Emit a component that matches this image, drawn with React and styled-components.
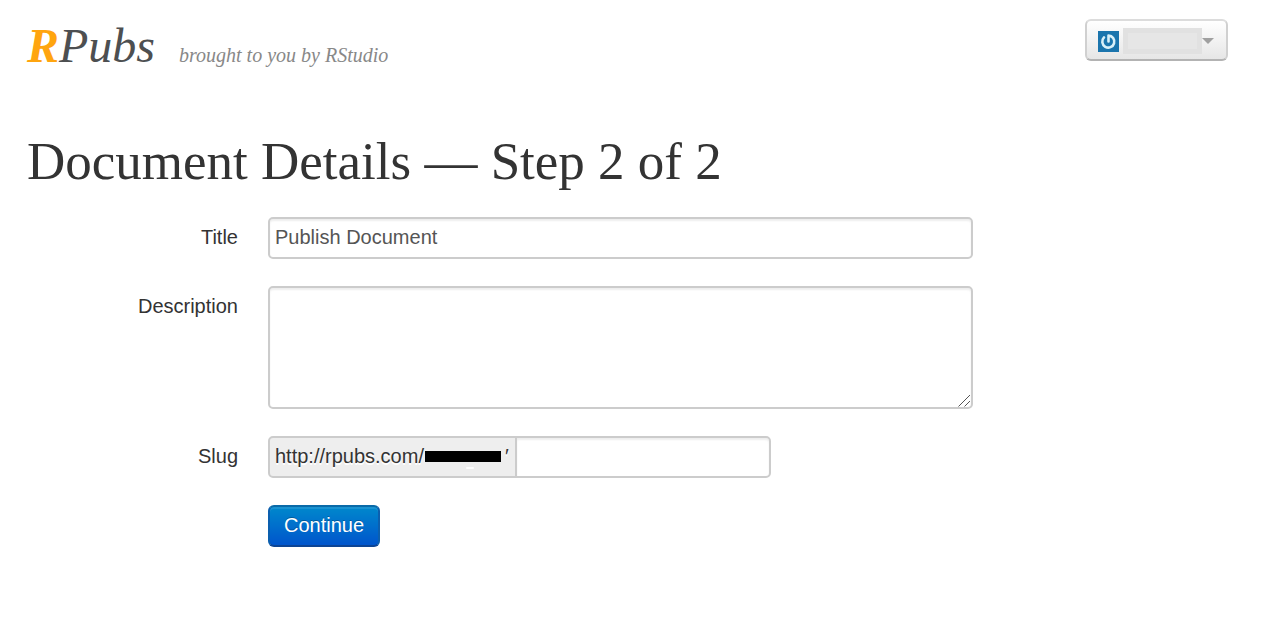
import React from "react";
import styled, { createGlobalStyle } from "styled-components";

const sans = `"Liberation Sans", Arial, sans-serif`;
const serif = `"Liberation Serif", "Times New Roman", serif`;

const GlobalStyle = createGlobalStyle`
  *, *::before, *::after { box-sizing: border-box; }
  body {
    margin: 0;
    background: #fff;
    color: #333;
    font: 20px/28px ${sans};
  }
`;

const Page = styled.div`
  padding: 19px 40px 40px 27px;
`;

const Header = styled.header`
  display: flex;
  justify-content: space-between;
  align-items: flex-start;
`;

const Brand = styled.div`
  display: flex;
  align-items: baseline;
  gap: 24px;
  font-family: ${serif};
  font-style: italic;
`;

const Logo = styled.a`
  font-size: 48px;
  line-height: 54px;
  color: #4d4f51;
  text-decoration: none;
`;

const LogoInitial = styled.b`
  color: #ffa50f;
`;

const Tagline = styled.span`
  font-size: 20px;
  color: #888;
`;

const AccountButton = styled.button`
  display: flex;
  align-items: center;
  width: 143px;
  height: 42px;
  padding: 2px 12px 0 11px;
  border: 2px solid #ccc;
  border-color: #dcdcdc #d0d0d0 #b3b3b3;
  border-radius: 6px;
  background: linear-gradient(#fff, #e6e6e6);
  cursor: pointer;
`;

const AccountName = styled.span`
  flex: 1;
  height: 26px;
  margin-left: 4px;
  border: 5px solid #e1e1e1;
  background: #e6e6e6;
`;

const Heading = styled.h1`
  margin: 58px 0 26px;
  font: 400 53px/60px ${serif};
`;

const Form = styled.form`
  display: grid;
  grid-template-columns: 211px minmax(0, 705px);
  column-gap: 30px;
  row-gap: 27px;
`;

const Label = styled.label`
  padding-top: 6px;
  text-align: right;
`;

const fieldStyle = `
  display: block;
  width: 100%;
  margin: 0;
  padding: 4px 5px 6px;
  border: 2px solid #ccc;
  border-radius: 5px;
  background: #fff;
  box-shadow: inset 0 2px 2px rgba(0, 0, 0, 0.07);
  color: #555;
  font: 20px/28px ${sans};
  outline: none;
`;

const TextInput = styled.input`
  ${fieldStyle}
  height: 42px;
`;

const TextAreaBox = styled.div`
  position: relative;
`;

const TextArea = styled.textarea`
  ${fieldStyle}
  height: 123px;
  resize: vertical;

  &::-webkit-resizer {
    background: transparent;
  }
`;

const GripIcon = styled.svg`
  position: absolute;
  right: 2px;
  bottom: 2px;
  pointer-events: none;
`;

const SlugGroup = styled.div`
  display: flex;
  max-width: 503px;
`;

const SlugPrefix = styled.span`
  position: relative;
  display: flex;
  flex: none;
  width: 249px;
  height: 42px;
  padding: 4px 5px;
  border: 2px solid #ccc;
  border-radius: 5px 0 0 5px;
  background: #eee;
  text-shadow: 0 2px 0 #fff;
`;

const HiddenName = styled.span`
  width: 76px;
  height: 11px;
  margin: 9px 4px 0 1px;
  background: #000;
`;

const Speck = styled.span`
  position: absolute;
  left: 196px;
  top: 29px;
  width: 8px;
  height: 2px;
  border-radius: 1px;
  background: #fff;
`;

const SlugInput = styled(TextInput)`
  flex: 1;
  min-width: 0;
  margin-left: -2px;
  border-radius: 0 5px 5px 0;
`;

const SubmitButton = styled.button`
  grid-column: 2;
  justify-self: start;
  height: 42px;
  padding: 0 14px 2px;
  border: 2px solid #0f5aa8;
  border-color: #0a6aa8 #0c5fae #0c4494;
  border-radius: 6px;
  background: linear-gradient(#0088cc, #0055cc);
  box-shadow: inset 0 2px 0 rgba(255, 255, 255, 0.1);
  color: #fff;
  font: 20px/28px ${sans};
  text-shadow: 0 -1px 0 rgba(0, 0, 0, 0.25);
  cursor: pointer;
`;

function Avatar() {
  return (
    <svg width="21" height="21" viewBox="0 0 21 21" aria-hidden="true">
      <rect width="21" height="21" fill="#1b75ad" />
      <path
        d="M10.5 10.5V4.6A6 6 0 1 1 6 6.4"
        fill="none"
        stroke="#d9f0f8"
        strokeWidth="2.6"
        strokeLinecap="round"
        strokeLinejoin="round"
      />
    </svg>
  );
}

function Caret() {
  return (
    <svg width="12" height="6" viewBox="0 0 12 6" aria-hidden="true">
      <path d="M0 0H12L6 6Z" fill="#a0a0a0" />
    </svg>
  );
}

function Grip() {
  return (
    <GripIcon width="13" height="13" viewBox="0 0 13 13" aria-hidden="true">
      <path d="M0.5 12.5L12 1M6.5 12.5L12 7" fill="none" stroke="#555" />
    </GripIcon>
  );
}

export default function App() {
  return (
    <>
      <GlobalStyle />
      <Page>
        <Header>
          <Brand>
            <Logo href="#"><LogoInitial>R</LogoInitial>Pubs</Logo>
            <Tagline>brought to you by RStudio</Tagline>
          </Brand>
          <AccountButton type="button" aria-label="Account menu">
            <Avatar />
            <AccountName />
            <Caret />
          </AccountButton>
        </Header>
        <main>
          <Heading>Document Details — Step 2 of 2</Heading>
          <Form onSubmit={(e) => e.preventDefault()}>
            <Label htmlFor="title">Title</Label>
            <TextInput id="title" defaultValue="Publish Document" />
            <Label htmlFor="description">Description</Label>
            <TextAreaBox>
              <TextArea id="description" />
              <Grip />
            </TextAreaBox>
            <Label htmlFor="slug">Slug</Label>
            <SlugGroup>
              <SlugPrefix>
                http://rpubs.com/
                <HiddenName />
                ′
                <Speck />
              </SlugPrefix>
              <SlugInput id="slug" />
            </SlugGroup>
            <SubmitButton type="submit">Continue</SubmitButton>
          </Form>
        </main>
      </Page>
    </>
  );
}
